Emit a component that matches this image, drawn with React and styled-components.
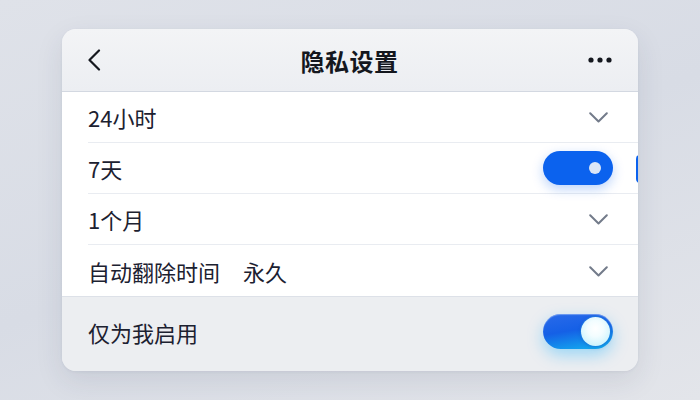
import styled, { createGlobalStyle } from "styled-components";

const GlobalStyle = createGlobalStyle`
  html, body {
    margin: 0;
    padding: 0;
  }
  body {
    font-family: "Noto Sans CJK SC", "Noto Sans", sans-serif;
    background: linear-gradient(160deg, #dfe2e9 0%, #d8dce5 50%, #e3e5ea 100%);
    min-height: 400px;
  }
`;

const Page = styled.div`
  width: 700px;
  height: 400px;
  box-sizing: border-box;
  padding: 29px 62px;
`;

const Card = styled.div`
  position: relative;
  width: 576px;
  height: 342px;
  border-radius: 14px;
  overflow: hidden;
  background: #eceef1;
  box-shadow: 0 10px 28px rgba(40, 50, 80, 0.1), 0 1px 3px rgba(40, 50, 80, 0.06);
  display: flex;
  flex-direction: column;
`;

const Header = styled.div`
  height: 62px;
  flex-shrink: 0;
  display: flex;
  align-items: center;
  justify-content: space-between;
  padding: 0 26px 0 25px;
  background: linear-gradient(180deg, #f3f4f6 0%, #eceef2 100%);
  border-bottom: 1px solid #d3d8e1;
`;

const Title = styled.div`
  font-size: 24px;
  font-weight: 700;
  color: #14171e;
  letter-spacing: 0.5px;
`;

const IconButton = styled.div`
  width: 24px;
  height: 24px;
  display: flex;
  align-items: center;
  justify-content: ${(p) => p.$align || "center"};
`;

const List = styled.div`
  background: #ffffff;
  display: flex;
  flex-direction: column;
`;

const Row = styled.div`
  position: relative;
  height: 51px;
  display: flex;
  align-items: center;
  justify-content: space-between;
  margin-left: 26px;
  padding-right: 25px;
  border-bottom: ${(p) => (p.$last ? "none" : "1px solid #e9ecf1")};
  box-sizing: border-box;
`;

const Label = styled.span`
  font-size: 22px;
  color: #1c2130;
`;

const Value = styled.span`
  margin-left: 23px;
`;

const Chevron = styled.svg`
  margin-right: 5px;
  margin-top: 1px;
`;

const Footer = styled.div`
  flex: 1;
  display: flex;
  align-items: center;
  justify-content: space-between;
  padding: 0 25px 5px 26px;
  background: #eceef1;
  border-top: 1px solid #dde1e8;
`;

const Toggle = styled.div`
  position: relative;
  width: 70px;
  height: 34px;
  border-radius: 17px;
  background: #0b62ee;
  box-shadow: 0 4px 12px rgba(11, 98, 238, 0.28);
  display: flex;
  align-items: center;
  justify-content: flex-end;
  padding-right: 12px;
  box-sizing: border-box;
`;

const Dot = styled.div`
  width: 12px;
  height: 12px;
  border-radius: 50%;
  background: #dbe6f7;
`;

const EdgeTab = styled.div`
  position: absolute;
  right: -28px;
  top: 12px;
  width: 30px;
  height: 28px;
  border-radius: 4px;
  background: #0b62ee;
`;

const GlowToggle = styled.div`
  width: 70px;
  height: 35px;
  border-radius: 18px;
  background: linear-gradient(170deg, #2a6bea 0%, #1560e6 45%, #12b4f0 100%);
  box-shadow: 0 6px 16px rgba(0, 170, 255, 0.35), inset 0 1px 1px rgba(255, 255, 255, 0.35);
  display: flex;
  align-items: center;
  justify-content: flex-end;
  padding-right: 3px;
  box-sizing: border-box;
`;

const Knob = styled.div`
  width: 29px;
  height: 29px;
  border-radius: 50%;
  background: radial-gradient(circle at 50% 40%, #ffffff 0%, #f2fdff 35%, #b9eefb 100%);
  box-shadow: 0 0 0 1px rgba(30, 130, 225, 0.6), 0 1px 4px rgba(0, 60, 160, 0.3);
`;

const ChevronDown = () => (
  <Chevron width="19" height="11" viewBox="0 0 19 11" fill="none">
    <path d="M1.2 1.2 L9.5 9.5 L17.8 1.2" stroke="#737b8a" strokeWidth="2" strokeLinecap="round" strokeLinejoin="round" />
  </Chevron>
);

const rows = [
  { label: "24小时", kind: "select" },
  { label: "7天", kind: "toggle" },
  { label: "1个月", kind: "select" },
  { label: "自动翻除时间", value: "永久", kind: "select" },
];

export default function App() {
  return (
    <>
      <GlobalStyle />
      <Page>
        <Card>
          <Header>
            <IconButton $align="flex-start">
              <svg width="14" height="22" viewBox="0 0 14 22" fill="none">
                <path d="M12 1.5 L2.5 11 L12 20.5" stroke="#15181f" strokeWidth="2.2" strokeLinecap="round" strokeLinejoin="round" />
              </svg>
            </IconButton>
            <Title>隐私设置</Title>
            <IconButton $align="flex-end">
              <svg width="24" height="6" viewBox="0 0 24 6">
                <circle cx="3" cy="3" r="2.6" fill="#14171e" />
                <circle cx="12" cy="3" r="2.6" fill="#14171e" />
                <circle cx="21" cy="3" r="2.6" fill="#14171e" />
              </svg>
            </IconButton>
          </Header>
          <List>
            {rows.map((r, i) => (
              <Row key={r.label} $last={i === rows.length - 1}>
                <Label>
                  {r.label}
                  {r.value && <Value>{r.value}</Value>}
                </Label>
                {r.kind === "select" ? (
                  <ChevronDown />
                ) : (
                  <>
                    <Toggle>
                      <Dot />
                    </Toggle>
                    <EdgeTab />
                  </>
                )}
              </Row>
            ))}
          </List>
          <Footer>
            <Label>仅为我启用</Label>
            <GlowToggle>
              <Knob />
            </GlowToggle>
          </Footer>
        </Card>
      </Page>
    </>
  );
}
